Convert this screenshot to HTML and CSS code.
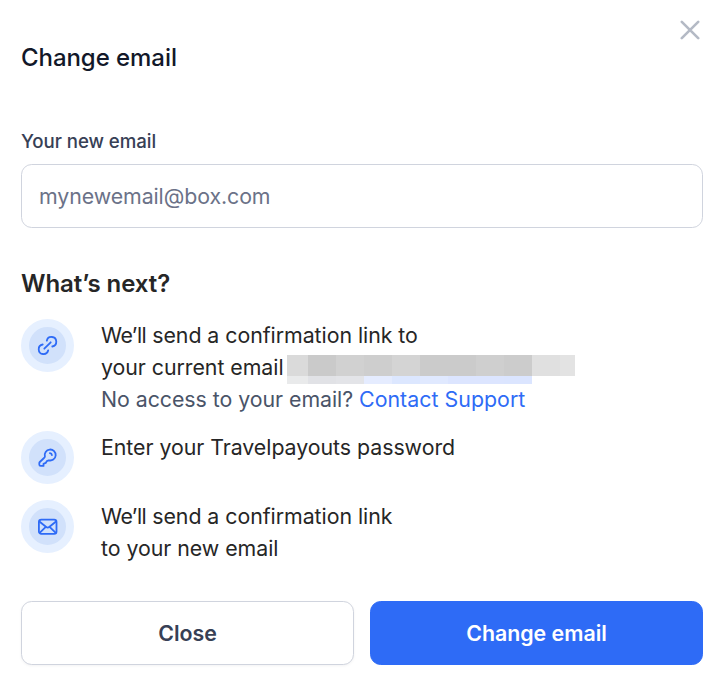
FILE: index.html
```html
<!DOCTYPE html>
<html lang="en">
<head>
    <meta charset="UTF-8">
    <meta name="viewport" content="width=device-width, initial-scale=1.0">
    <title>Change email</title>
    <link rel="stylesheet" href="styles.css">
</head>
<body>
    <div class="modal">
        <div class="header">
            <h1>Change email</h1>
            <button class="close-icon" aria-label="Close">
                <svg width="20" height="20" viewBox="0 0 20 20" fill="none" stroke="#b4bac5" stroke-width="2.6" stroke-linecap="round">
                    <path d="M1.8 1.8l16.4 16.4M18.2 1.8l-16.4 16.4"/>
                </svg>
            </button>
        </div>

        <label for="email">Your new email</label>
        <input type="email" id="email" placeholder="mynewemail@box.com">

        <h2>What’s next?</h2>
        <ul class="steps">
            <li>
                <span class="step-icon">
                    <svg width="21" height="21" viewBox="-0.5 -0.5 21 21">
                        <path d="M9.3 5.2A4.8 4.8 0 1 1 14.8 11"/>
                        <path d="M10.7 14.8A4.8 4.8 0 1 1 5.2 9"/>
                        <path d="M6.8 13.2l6.4-6.4"/>
                    </svg>
                </span>
                <p>
                    <span class="tight">We’ll</span> send a confirmation link to<br>
                    your current email <span class="hidden-email"></span><br>
                    <span class="note">No access to your email? <a href="#">Contact Support</a></span>
                </p>
            </li>
            <li>
                <span class="step-icon">
                    <svg width="21" height="21" viewBox="-0.5 -0.5 21 21">
                        <path d="M7.4 9a5.5 5.5 0 1 1 3.8 3.8L9.4 13.6l-1.2 1.8-2.2 1v2H3.2a1.4 1.4 0 0 1-1.4-1.4v-1.4a1.6 1.6 0 0 1 .5-1.1l4.2-4a2 2 0 0 0 .9-1.5z"/>
                        <path d="M12.4 5.7a2.3 2.3 0 0 1 2 2"/>
                    </svg>
                </span>
                <p>Enter your Travelpayouts password</p>
            </li>
            <li>
                <span class="step-icon">
                    <svg width="21" height="21" viewBox="-0.5 -0.5 21 21">
                        <rect x="1.4" y="3.2" width="17.6" height="14.2" rx="2.4"/>
                        <path d="M2.2 5.2l6.5 5.3a2.4 2.4 0 0 0 3 0l6.5-5.3M2.4 16.2l5.4-5.4M18 16.2l-5.4-5.4"/>
                    </svg>
                </span>
                <p><span class="tight">We’ll</span> send a confirmation link<br>to your new email</p>
            </li>
        </ul>

        <div class="buttons">
            <button class="btn btn-secondary">Close</button>
            <button class="btn btn-primary">Change email</button>
        </div>
    </div>
</body>
</html>
```

FILE: styles.css
```css
* {
    box-sizing: border-box;
}
body {
    margin: 0;
    background-color: #fff;
    font-family: Inter, "Liberation Sans", sans-serif;
    font-size: 21.33px;
    line-height: 32px;
    color: #262626;
}
.modal {
    width: 722px;
    height: 684px;
    padding: 20px 19px 19px 21px;
}
.header {
    display: flex;
    justify-content: space-between;
    align-items: flex-start;
    height: 108px;
}
h1 {
    margin: 22px 0 0;
    font-size: 24px;
    font-weight: 500;
    letter-spacing: -0.06px;
    color: #121829;
}
.close-icon {
    display: flex;
    margin: 0 3px 0 0;
    padding: 0;
    border: 0;
    background: none;
}
label {
    display: block;
    height: 36px;
    line-height: 27px;
    font-size: 18.67px;
    font-weight: 500;
    letter-spacing: -0.06px;
    color: #374055;
}
input {
    display: block;
    width: 100%;
    height: 64px;
    padding: 0 17px;
    border: 1px solid #d0d4de;
    border-radius: 10.67px;
    background-color: #fff;
    font: inherit;
    letter-spacing: -0.08px;
}
input::placeholder {
    color: #6b7288;
    opacity: 1;
}
h2 {
    margin: 40px 0 19px;
    font-size: 24px;
    line-height: 32px;
    font-weight: 600;
    letter-spacing: -0.08px;
}
.steps {
    display: flex;
    flex-direction: column;
    gap: 16px;
    margin: 0;
    padding: 0;
    list-style: none;
}
.steps li {
    display: flex;
    gap: 27px;
}
.steps p {
    margin: 0;
    letter-spacing: -0.04px;
}
.tight {
    letter-spacing: -0.5px;
}
.step-icon {
    display: flex;
    flex-shrink: 0;
    justify-content: center;
    align-items: center;
    width: 53px;
    height: 53px;
    border: 8px solid #e6f0ff;
    border-radius: 50%;
    background-color: #d1e1fb;
}
.step-icon svg {
    fill: none;
    stroke: #2e6bf6;
    stroke-width: 1.8;
    stroke-linecap: round;
    stroke-linejoin: round;
}
.hidden-email {
    display: inline-block;
    width: 288px;
    height: 29px;
    margin: 4px 0 -8px -2.6px;
    vertical-align: top;
    background:
        linear-gradient(90deg, #dadada 21px, #cacaca 21px 49px, #d1d1d1 49px 77px, #cecece 77px 105px, #d4d4d4 105px 133px, #cbcbcb 133px 189px, #cfcfcf 189px 217px, #cccccc 217px 245px, #e0e0e0 245px 273px, #e3e3e3 273px) 0 0 / 288px 21px no-repeat,
        linear-gradient(90deg, #e9eaeb 21px, #e1e2e6 21px 49px, #e3e4e8 49px 77px, #e5ecff 77px 105px, #dce7ff 105px 133px, #e0e9ff 133px 161px, #dce5ff 161px 217px, #dbe5ff 217px) 0 21px / 245px 8px no-repeat;
}
.note {
    color: #4a5468;
}
.note a {
    letter-spacing: 0.04px;
    color: #2e6bf6;
    text-decoration: none;
}
.buttons {
    display: grid;
    grid-template-columns: 1fr 1fr;
    gap: 16px;
    margin-top: 37px;
}
.btn {
    height: 64px;
    border: 1px solid #d0d4de;
    border-radius: 10.67px;
    font: inherit;
    font-weight: 600;
}
.btn-secondary {
    background-color: #fff;
    color: #374055;
    box-shadow: 0 1px 3px rgba(16, 24, 40, 0.05);
}
.btn-primary {
    border-color: #2e6bf6;
    background-color: #2e6bf6;
    color: #fff;
}
```
